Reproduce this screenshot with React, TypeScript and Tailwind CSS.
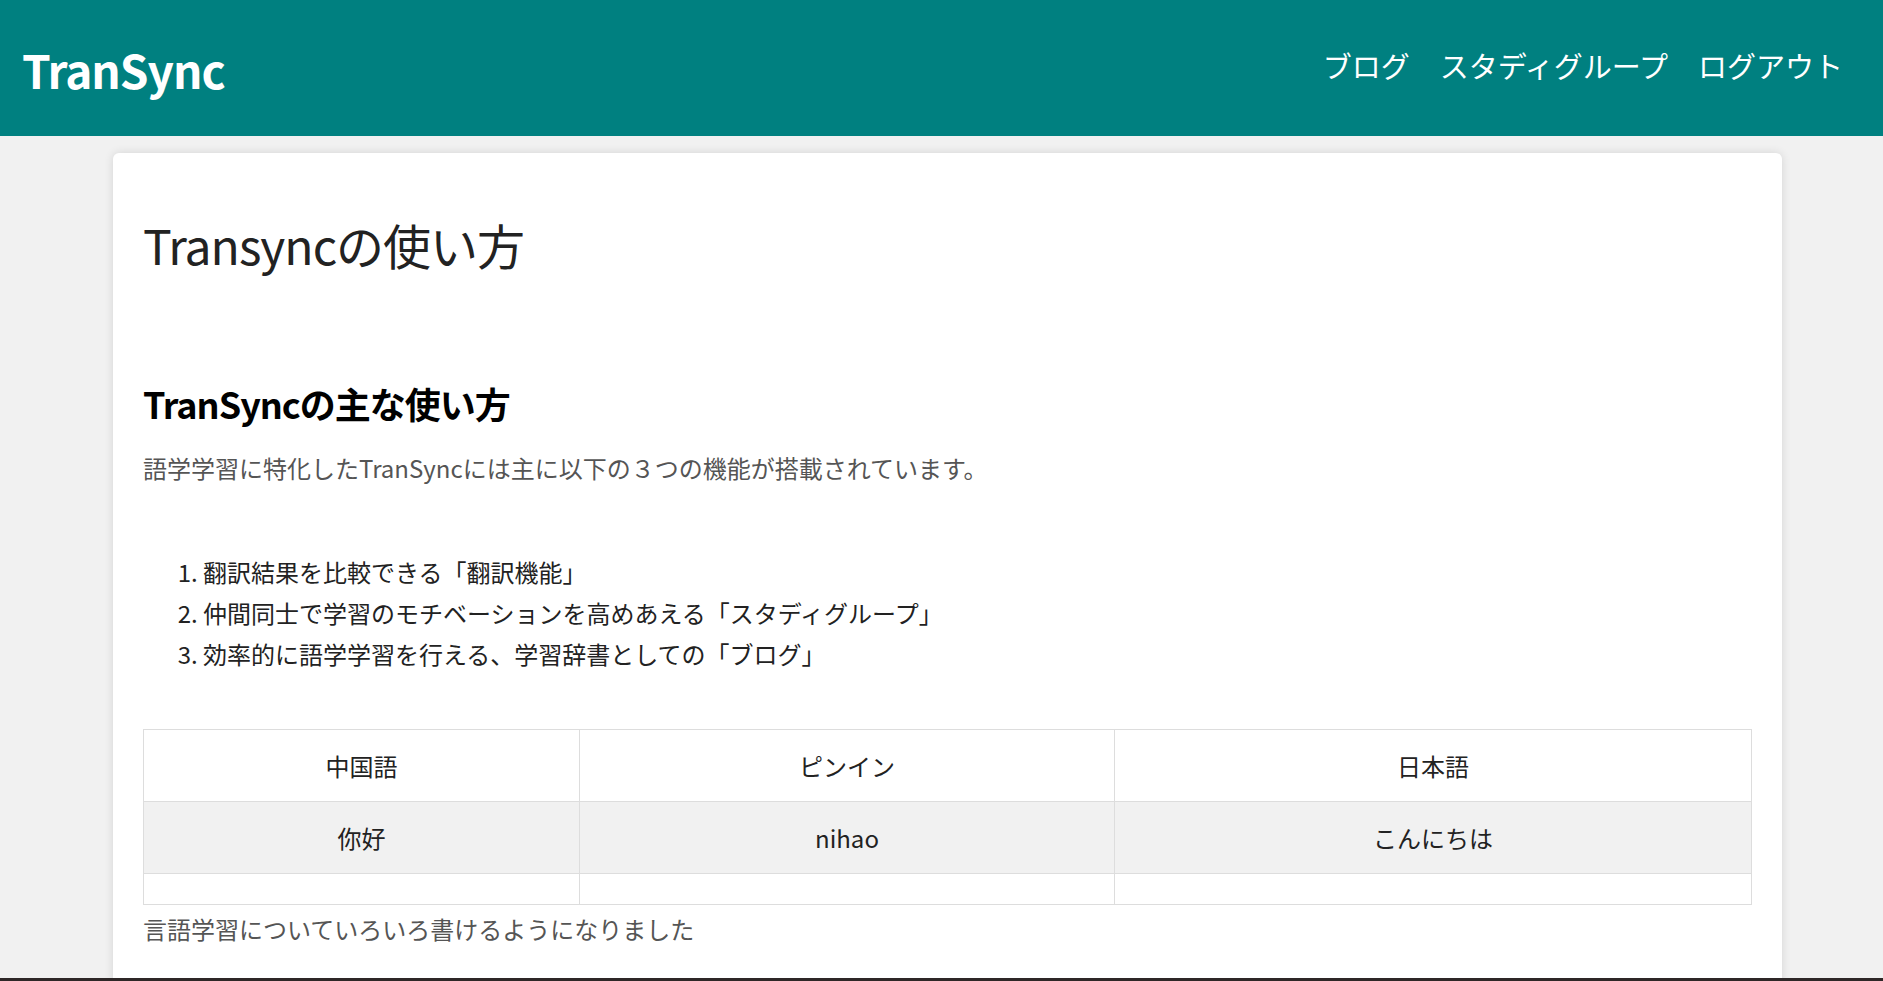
import React from "react";

const font = { fontFamily: '"Noto Sans CJK JP", "Noto Sans", sans-serif' };

export default function App() {
  return (
    <div
      className="h-[981px] w-full flex flex-col bg-[#f1f1f1] overflow-hidden font-['Noto_Sans_CJK_JP',_'Noto_Sans',_sans-serif]"
      style={font}
    >
      <header className="h-[136px] shrink-0 bg-[#008080] flex items-center justify-between pl-[22px] pr-[40px]">
        <div className="text-white text-[46px] font-bold leading-none tracking-[-1px] mt-[2px]">TranSync</div>
        <nav className="flex items-center gap-[30px] text-white text-[29px] leading-none mb-[6px]">
          <a>ブログ</a>
          <a>スタディグループ</a>
          <a>ログアウト</a>
        </nav>
      </header>
      <main className="flex-1 min-h-0 overflow-hidden pt-[17px]">
        <div className="ml-[113px] w-[1669px] bg-white rounded-[6px] shadow-[0_0_10px_rgba(0,0,0,0.12)] px-[30px] pt-[62px] pb-[40px]">
          <h1 className="text-[48px] leading-[58px] text-[#222] font-normal tracking-[-1px]">Transyncの使い方</h1>
          <h2 className="mt-[109px] text-[36px] leading-[43px] font-bold text-black tracking-[-1px]">TranSyncの主な使い方</h2>
          <p className="mt-[25px] text-[24px] leading-[36px] text-[#555]">
            語学学習に特化したTranSyncには主に以下の３つの機能が搭載されています。
          </p>
          <ol className="mt-[65px] list-decimal pl-[60px] text-[24px] leading-[41px] text-[#222]">
            <li>翻訳結果を比較できる「翻訳機能」</li>
            <li>仲間同士で学習のモチベーションを高めあえる「スタディグループ」</li>
            <li>効率的に語学学習を行える、学習辞書としての「ブログ」</li>
          </ol>
          <table className="mt-[55px] w-full border-collapse text-[24px] text-[#222]">
            <tbody>
              <tr>
                <td className="w-[436px] border border-[#ddd] text-center py-[15px] leading-[41px]">中国語</td>
                <td className="w-[535px] border border-[#ddd] text-center py-[15px] leading-[41px]">ピンイン</td>
                <td className="border border-[#ddd] text-center py-[15px] leading-[41px]">日本語</td>
              </tr>
              <tr className="bg-[#f1f1f1]">
                <td className="border border-[#ddd] text-center py-[15px] leading-[41px]">你好</td>
                <td className="border border-[#ddd] text-center py-[15px] leading-[41px]">nihao</td>
                <td className="border border-[#ddd] text-center py-[15px] leading-[41px]">こんにちは</td>
              </tr>
              <tr>
                <td className="border border-[#ddd] py-[15px]"></td>
                <td className="border border-[#ddd] py-[15px]"></td>
                <td className="border border-[#ddd] py-[15px]"></td>
              </tr>
            </tbody>
          </table>
          <p className="mt-[6px] text-[24px] leading-[36px] text-[#555]">言語学習についていろいろ書けるようになりました</p>
        </div>
      </main>
      <div className="h-[3px] shrink-0 bg-[#2e2727]"></div>
    </div>
  );
}
